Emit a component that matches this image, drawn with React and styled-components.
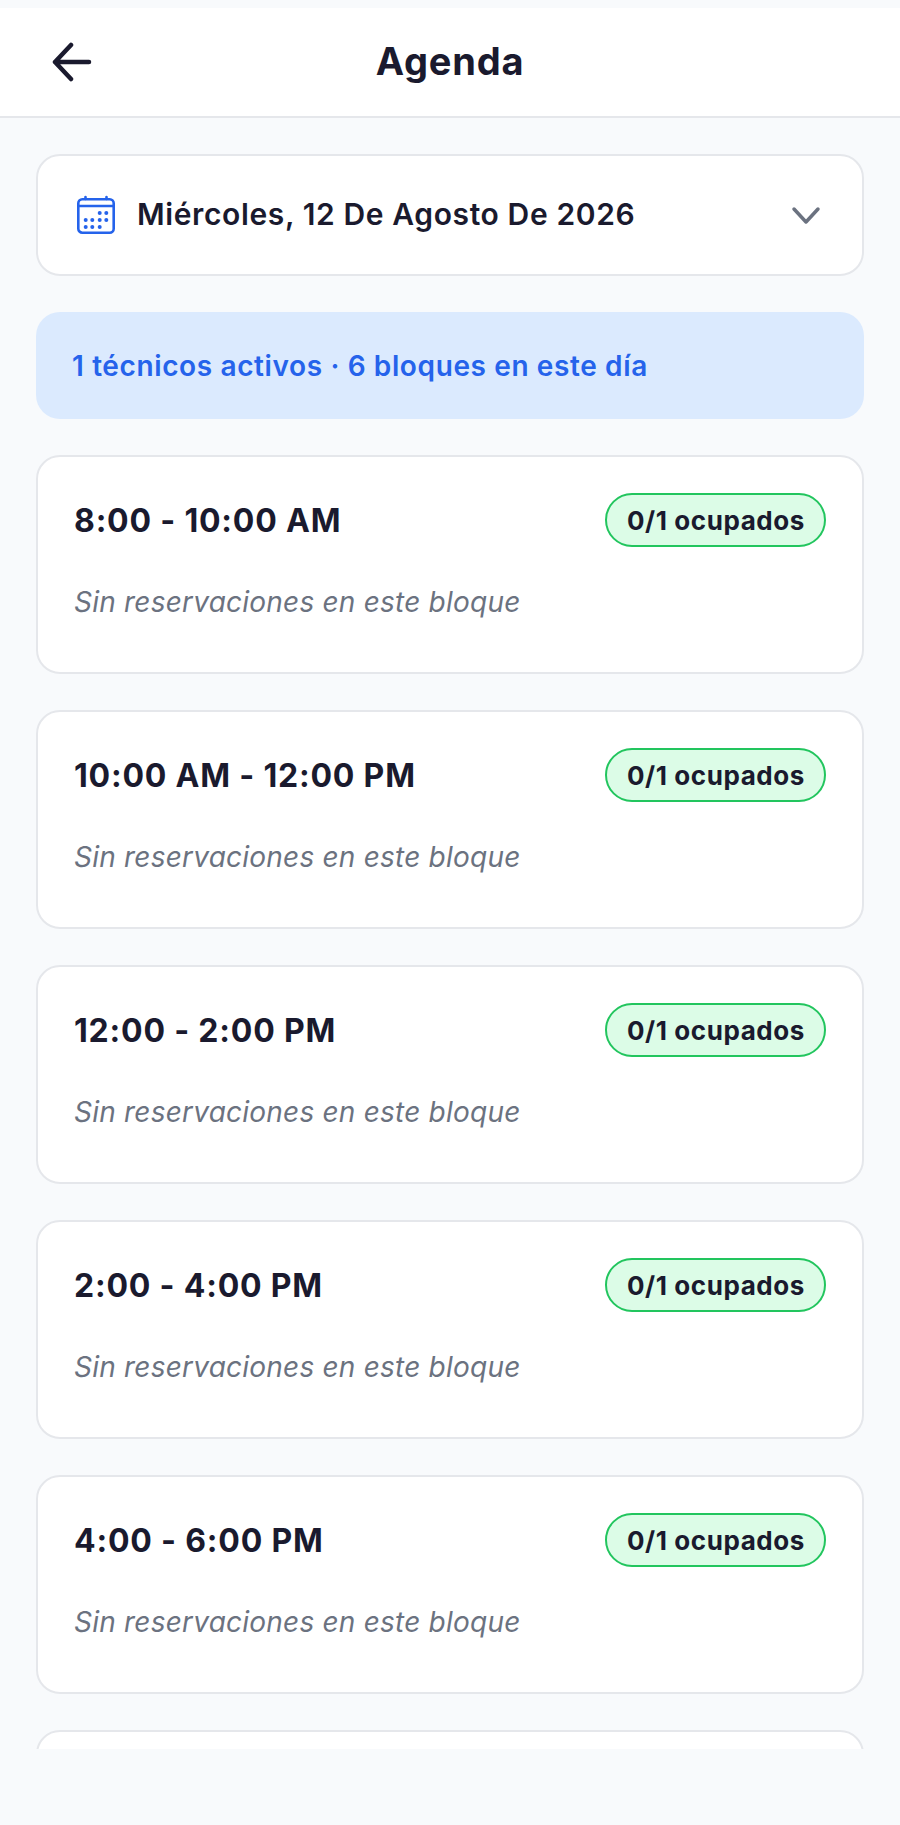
import React from "react";
import styled, { createGlobalStyle } from "styled-components";

const Global = createGlobalStyle`
  html, body { margin: 0; padding: 0; background: #f8fafc; }
  body { font-family: Inter, "Liberation Sans", sans-serif; }
  * { box-sizing: border-box; }
`;

const Page = styled.div`
  width: 900px;
  height: 1825px;
  padding-top: 8px;
  background: #f8fafc;
  overflow: hidden;
`;

const Header = styled.header`
  height: 110px;
  background: #fff;
  border-bottom: 2px solid #e5e7eb;
  display: grid;
  grid-template-columns: 1fr auto 1fr;
  align-items: center;
  padding: 0 52px;
`;

const BackButton = styled.div`
  display: flex;
  align-items: center;
`;

const Title = styled.h1`
  margin: 0 0 2px;
  font-size: 38px;
  line-height: 44px;
  letter-spacing: 0.8px;
  font-weight: 700;
  color: #1a1a2e;
`;

const Scroll = styled.main`
  height: 1631px;
  overflow: hidden;
  padding: 36px 36px 0;
  display: flex;
  flex-direction: column;
  gap: 36px;
`;

const DateCard = styled.div`
  flex: none;
  height: 122px;
  background: #fff;
  border: 2px solid #e5e7eb;
  border-radius: 24px;
  display: flex;
  align-items: center;
  padding: 0 41px 0 38px;
  gap: 21px;
`;

const DateText = styled.span`
  flex: 1;
  margin-bottom: 2px;
  font-size: 30px;
  letter-spacing: 0.62px;
  font-weight: 600;
  color: #1a1a2e;
`;

const Banner = styled.div`
  flex: none;
  height: 107px;
  background: #dbeafe;
  border-radius: 24px;
  display: flex;
  align-items: center;
  padding: 0 36px;
  font-size: 28px;
  letter-spacing: 0.62px;
  font-weight: 600;
  color: #2563eb;
`;

const Card = styled.section`
  flex: none;
  height: 219px;
  background: #fff;
  border: 2px solid #e5e7eb;
  border-radius: 24px;
  padding: 36px 36px 0 36px;
`;

const CardTop = styled.div`
  display: flex;
  align-items: center;
  justify-content: space-between;
`;

const Time = styled.span`
  font-size: 32px;
  letter-spacing: 0.8px;
  font-weight: 700;
  color: #1a1a2e;
`;

const Badge = styled.span`
  height: 54px;
  padding: 0 19px 0 20px;
  display: inline-flex;
  align-items: center;
  background: #dcfce7;
  border: 2px solid #22c55e;
  border-radius: 27px;
  font-size: 26px;
  letter-spacing: 0.58px;
  font-weight: 700;
  color: #1a1a2e;
`;

const Empty = styled.p`
  margin: 38px 0 0;
  font-size: 28px;
  line-height: 34px;
  letter-spacing: 0.22px;
  font-style: italic;
  color: #6b7280;
`;

const slots = [
  "8:00 - 10:00 AM",
  "10:00 AM - 12:00 PM",
  "12:00 - 2:00 PM",
  "2:00 - 4:00 PM",
  "4:00 - 6:00 PM",
];

const dots = [
  [23.7, 18], [30.3, 18],
  [9.7, 25], [16.3, 25], [23.7, 25], [30.3, 25],
  [9.7, 32], [16.3, 32], [23.7, 32],
];

export default function App() {
  return (
    <Page>
      <Global />
      <Header>
        <BackButton>
          <svg width="40" height="40" viewBox="0 0 40 40" fill="none" stroke="#1a1a2e" strokeWidth="4.5" strokeLinecap="round" strokeLinejoin="round">
            <path d="M37 20H3M19 3 3 20l16 17" />
          </svg>
        </BackButton>
        <Title>Agenda</Title>
      </Header>
      <Scroll>
        <DateCard>
          <svg width="40" height="40" viewBox="0 0 40 40" fill="none" stroke="#2563eb" strokeWidth="2.6" strokeLinecap="round">
            <rect x="2.3" y="4.3" width="35.4" height="33.4" rx="4" />
            <path d="M2.3 11h35.4M9.5 2v2M30.5 2v2" />
            {dots.map(([x, y]) => (
              <circle key={`${x}-${y}`} cx={x} cy={y} r="2" fill="#2563eb" stroke="none" />
            ))}
          </svg>
          <DateText>Miércoles, 12 De Agosto De 2026</DateText>
          <svg width="30" height="30" viewBox="0 0 30 30" fill="none" stroke="#6b7280" strokeWidth="3.5" strokeLinecap="round" strokeLinejoin="round">
            <path d="m3 9 12 13L27 9" />
          </svg>
        </DateCard>
        <Banner>1 técnicos activos · 6 bloques en este día</Banner>
        {slots.map((s) => (
          <Card key={s}>
            <CardTop>
              <Time>{s}</Time>
              <Badge>0/1 ocupados</Badge>
            </CardTop>
            <Empty>Sin reservaciones en este bloque</Empty>
          </Card>
        ))}
        <Card />
      </Scroll>
    </Page>
  );
}
